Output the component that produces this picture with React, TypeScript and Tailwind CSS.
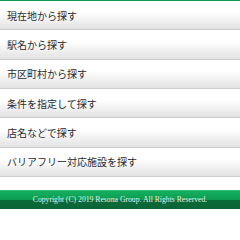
const items = [
  '現在地から探す',
  '駅名から探す',
  '市区町村から探す',
  '条件を指定して探す',
  '店名などで探す',
  'バリアフリー対応施設を探す',
];

export default function App() {
  return (
    <div className="w-[240px] h-[240px] bg-white overflow-hidden">
      <div className="h-px bg-[#0a9b4e]" />

      {/* Search menu */}
      <ul className="flex flex-col">
        {items.map((label) => (
          <li
            key={label}
            className="h-[29.35px] flex items-center pl-[7px] pt-px border-b border-[#cccccc] bg-[linear-gradient(to_bottom,#ffffff_0%,#ffffff_40%,#e2e2e2_100%)] text-[10px] leading-none text-[#2a2a2a] font-['Noto_Sans_CJK_JP',sans-serif]"
          >
            {label}
          </li>
        ))}
      </ul>

      {/* Footer */}
      <div className="mt-[13px] h-[19px] flex items-center justify-center border-t border-[#2cc070] bg-[linear-gradient(to_bottom,#14b060_0%,#0b9a4e_50%,#0b6a38_50%,#0b6536_100%)]">
        <p className="text-[7.7px] leading-none text-[#e4eee8] font-['Liberation_Serif',serif]">
          Copyright (C) 2019 Resona Group. All Rights Reserved.
        </p>
      </div>
    </div>
  );
}
